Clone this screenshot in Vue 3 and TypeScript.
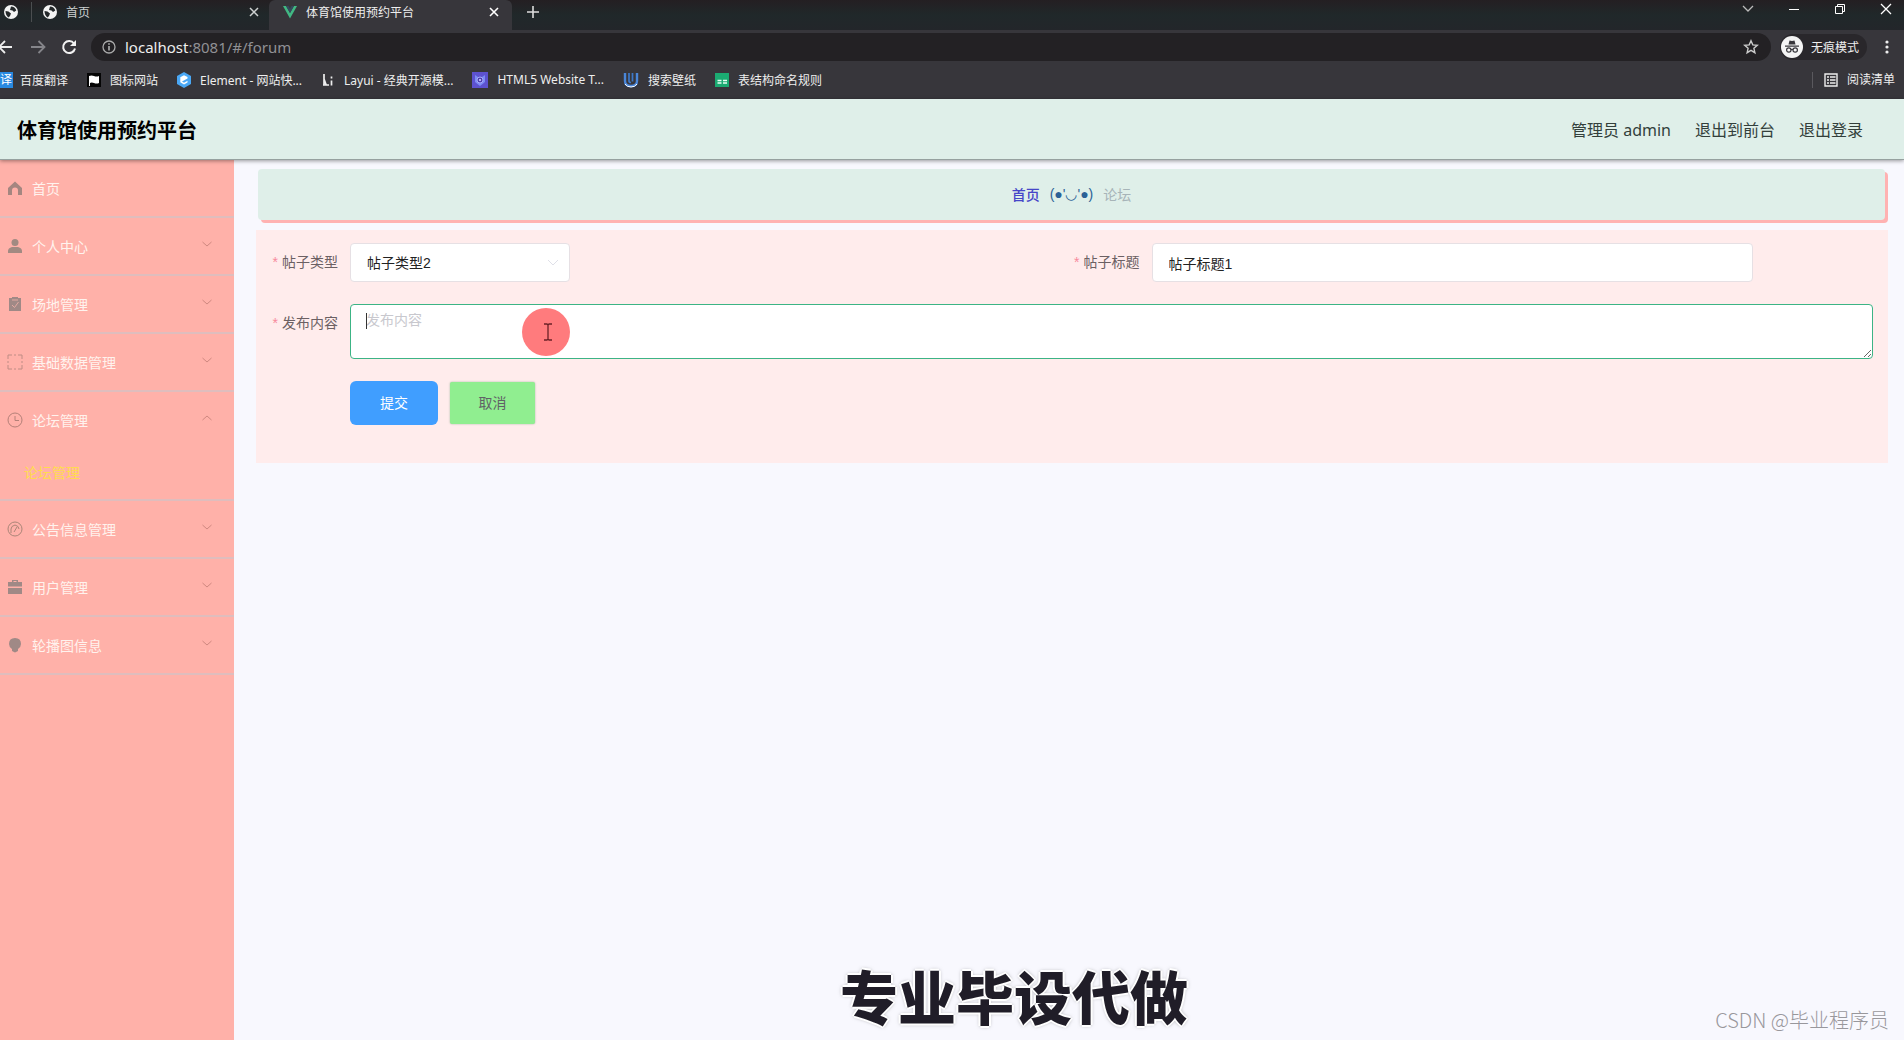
<script setup lang="ts">
import { ref } from 'vue'

interface MenuItem {
  label: string
  icon: string
  open?: boolean
  children?: string[]
}

const menu: MenuItem[] = [
  { label: '首页', icon: 'home' },
  { label: '个人中心', icon: 'user', children: [] },
  { label: '场地管理', icon: 'claim', children: [] },
  { label: '基础数据管理', icon: 'scan', children: [] },
  { label: '论坛管理', icon: 'clock', open: true, children: ['论坛管理'] },
  { label: '公告信息管理', icon: 'compass', children: [] },
  { label: '用户管理', icon: 'case', children: [] },
  { label: '轮播图信息', icon: 'bulb', children: [] },
]

const postType = ref('帖子类型2')
const postTitle = ref('帖子标题1')
const postContent = ref('')
</script>

<template>
  <div class="page">
    <div class="browser">
      <div class="tabs">
        <div class="tab pinned">
          <svg class="ico16" viewBox="0 0 16 16"><circle cx="8" cy="8" r="7" fill="#f4f4f4" /><path d="M2.500 7l3 .5L8 9.500 7 12l-1.500 1.500Q2.500 11 2.500 7zM8 2.500q4 0 5.300 4L11 8 9.500 6.500 7 6z" fill="#24282a" /></svg>
        </div>
        <div class="tab first">
          <svg class="ico16" viewBox="0 0 16 16"><circle cx="8" cy="8" r="7" fill="#f4f4f4" /><path d="M2.500 7l3 .5L8 9.500 7 12l-1.500 1.500Q2.500 11 2.500 7zM8 2.500q4 0 5.300 4L11 8 9.500 6.500 7 6z" fill="#24282a" /></svg>
          <span class="tab-name">首页</span>
          <button class="bare" aria-label="关闭"><svg width="10" height="10" viewBox="0 0 10 10"><path d="M1 1l8 8M9 1l-8 8" stroke="#cfd2d2" stroke-width="1.500" /></svg></button>
        </div>
        <div class="tab active">
          <svg class="ico16" viewBox="0 0 16 16"><path d="M1 2h3l4 7 4-7h3L8 14.500z" fill="#41b883" /><path d="M4 2h2.500L8 4.700 9.500 2H12L8 9z" fill="#35495e" /></svg>
          <span class="tab-name">体育馆使用预约平台</span>
          <button class="bare" aria-label="关闭"><svg width="10" height="10" viewBox="0 0 10 10"><path d="M1 1l8 8M9 1l-8 8" stroke="#fff" stroke-width="1.600" /></svg></button>
        </div>
        <button class="bare plus" aria-label="新标签页"><svg width="14" height="14" viewBox="0 0 14 14"><path d="M7 1v12M1 7h12" stroke="#ddd" stroke-width="1.600" /></svg></button>
        <div class="window">
          <button class="bare" aria-label="搜索标签页"><svg width="12" height="12" viewBox="0 0 12 12"><path d="M1 3l5 5 5-5" fill="none" stroke="#bbb" stroke-width="1.300" /></svg></button>
          <button class="bare" aria-label="最小化"><svg width="12" height="12" viewBox="0 0 12 12"><path d="M1 6.500h10" stroke="#fff" /></svg></button>
          <button class="bare" aria-label="还原"><svg width="12" height="12" viewBox="0 0 12 12"><path d="M1.500 3.500h7v7h-7zM3.500 3V1.500h7v7H9" fill="none" stroke="#fff" /></svg></button>
          <button class="bare" aria-label="关闭窗口"><svg width="12" height="12" viewBox="0 0 12 12"><path d="M1 1l10 10M11 1L1 11" stroke="#fff" stroke-width="1.300" /></svg></button>
        </div>
      </div>

      <div class="toolbar">
        <button class="bare" aria-label="后退"><svg width="12" height="16" viewBox="0 0 12 16"><path d="M12 8H0M5 2L-1 8l6 6" fill="none" stroke="#eee" stroke-width="1.800" /></svg></button>
        <button class="bare forward" aria-label="前进"><svg width="16" height="16" viewBox="0 0 16 16"><path d="M1 8h13M8.500 2l6 6-6 6" fill="none" stroke="#85858a" stroke-width="1.800" /></svg></button>
        <button class="bare reload" aria-label="刷新"><svg width="16" height="16" viewBox="0 0 16 16"><path d="M13 4.500A6 6 0 1 0 14 9.500" fill="none" stroke="#f2f2f2" stroke-width="2" /><path d="M15 1v6H9z" fill="#f2f2f2" /></svg></button>
        <div class="address">
          <svg width="14" height="14" viewBox="0 0 14 14"><circle cx="7" cy="7" r="6" fill="none" stroke="#aaa" stroke-width="1.300" /><path d="M7 6v4.500M7 3.300v1.500" stroke="#bbb" stroke-width="1.500" /></svg>
          <span class="url"><b>localhost</b>:8081/#/forum</span>
          <svg class="star" width="16" height="16" viewBox="0 0 16 16"><path d="M8 1.800l1.800 4.100 4.500.4-3.400 3 1 4.400L8 11.400l-3.900 2.300 1-4.400-3.400-3 4.500-.4z" fill="none" stroke="#ccc" stroke-width="1.400" /></svg>
        </div>
        <div class="incognito">
          <svg width="22" height="22" viewBox="0 0 22 22"><circle cx="11" cy="11" r="11" fill="#f4f4f4" /><path d="M7.500 8.500L8.500 4.500l2.500.6 2.500-.6 1 4zM4 9.500h14v1.300H4z" fill="#37363b" /><g fill="none" stroke="#37363b" stroke-width="1.200"><circle cx="7.800" cy="14" r="2.200" /><circle cx="14.200" cy="14" r="2.200" /><path d="M10 13.700q1-.7 2 0" /></g></svg>
          <span>无痕模式</span>
        </div>
        <button class="bare dots" aria-label="菜单"><svg width="4" height="16" viewBox="0 0 4 16"><g fill="#eee"><circle cx="2" cy="3" r="1.600" /><circle cx="2" cy="8" r="1.600" /><circle cx="2" cy="13" r="1.600" /></g></svg></button>
      </div>

      <div class="bookmarks">
        <a href="#" class="mark clipped"><span class="yi">译</span>百度翻译</a>
        <a href="#" class="mark"><svg width="14" height="14" viewBox="0 0 14 14"><path d="M0 0h14v14H0z" fill="#050505" /><path d="M2 3q2.500-1 5 0t5 0v7q-2.500 1-5 0t-4 0v3H2z" fill="#fff" /></svg>图标网站</a>
        <a href="#" class="mark"><svg width="14" height="16" viewBox="0 0 14 16"><path d="M7 0l7 4v8l-7 4-7-4V4z" fill="#4aa8f5" /><path d="M10.500 5L7 3.200 3.300 5.300v5L7 12.500l3.500-2V8.700L7 10.700 5 9.600l5.500-3.100z" fill="#fff" /></svg>Element - 网站快...</a>
        <a href="#" class="mark"><svg width="14" height="14" viewBox="0 0 14 14"><path d="M3 1v11M3 6l2 5.500M2 12h6M10.500 7.500v5M10.500 3.500v2" fill="none" stroke="#eee" stroke-width="1.700" /></svg>Layui - 经典开源模...</a>
        <a href="#" class="mark"><svg width="16" height="16" viewBox="0 0 16 16"><path d="M0 0h16v16H0z" fill="#5d52cf" /><path d="M3 3l3 2h4l3-2v7l-5 4-5-4z" fill="#7b8cf5" /><circle cx="8" cy="8" r="3" fill="#4a3fb0" stroke="#a9a8f8" /><circle cx="8" cy="8" r="1" fill="#dcdcff" /></svg>HTML5 Website T...</a>
        <a href="#" class="mark"><svg width="16" height="16" viewBox="0 0 16 16"><path d="M2 1v8q0 5 6 5t6-5V1" fill="none" stroke="#4a86d8" stroke-width="2.400" /><path d="M6 1v8q0 1.500 2 1.500M9.500 1v8.500" fill="none" stroke="#3d78c8" stroke-width="1.700" /><path d="M2 12q2 3 6 3t6-3" fill="none" stroke="#fff" /></svg>搜索壁纸</a>
        <a href="#" class="mark"><svg width="14" height="14" viewBox="0 0 14 14"><path d="M0 0h14v14H0z" fill="#1bab72" /><path d="M2.500 7.500h4M8 7.500h4M2.500 10h4M8 10h4" stroke="#e8fff4" stroke-width="1.400" /></svg>表结构命名规则</a>
        <a href="#" class="mark reading"><svg width="14" height="14" viewBox="0 0 14 14"><path d="M1 1h12v12H1zM3 4h2M3 7h2M3 10h2M6 4h5.500M6 7h5.500M6 10h5.500" fill="none" stroke="#eee" stroke-width="1.400" /></svg>阅读清单</a>
      </div>
    </div>

    <header class="header">
      <h1>体育馆使用预约平台</h1>
      <nav>
        <span>管理员 admin</span>
        <a href="#">退出到前台</a>
        <a href="#">退出登录</a>
      </nav>
    </header>

    <div class="body">
      <aside class="sidebar">
        <ul>
          <li v-for="item in menu" :key="item.label">
            <a href="#" class="item">
              <svg class="ico16" viewBox="0 0 16 16">
                <path v-if="item.icon === 'home'" d="M8 1.500L15 8v7h-4v-4.500a3 3 0 0 0-6 0V15H1V8z" fill="#a58680" />
                <template v-else-if="item.icon === 'user'"><circle cx="8" cy="4.500" r="3.500" fill="#a28a82" /><path d="M1 15v-2q0-3 4-4h6q4 1 4 4v2z" fill="#a28a82" /></template>
                <template v-else-if="item.icon === 'claim'"><path d="M2 2h3V1h6v1h3v13H2z" fill="#a08986" /><path d="M5 9l2.500 2.500L11.500 6M5 4h6" fill="none" stroke="#e3aaa2" /></template>
                <path v-else-if="item.icon === 'scan'" d="M1 5V1h4M11 1h4v4M15 11v4h-4M5 15H1v-4M1 7v2M15 7v2M7 1h2M7 15h2" fill="none" stroke="#bf8c84" />
                <template v-else-if="item.icon === 'clock'"><circle cx="8" cy="8" r="7" fill="none" stroke="#b48078" /><path d="M8 4v4.500h4" fill="none" stroke="#b48078" /></template>
                <template v-else-if="item.icon === 'compass'"><circle cx="8" cy="8" r="7" fill="none" stroke="#ab8577" /><path d="M4 12V8q0-3 4-4 4 1 4 4M7 11l3-5" fill="none" stroke="#ab8577" /></template>
                <path v-else-if="item.icon === 'case'" d="M5 3V1h6v2h4v4.500H1V3zM1 9h14v6H1zM6.500 3h3V2h-3z" fill="#a08986" fill-rule="evenodd" />
                <path v-else d="M8 1q6 0 6 6 0 3-3 5v2l-3 1.500L5 14v-2Q2 10 2 7q0-6 6-6z" fill="#a08986" />
              </svg>
              <span>{{ item.label }}</span>
              <svg v-if="item.children" class="arrow" :class="{ up: item.open }" width="12" height="12" viewBox="0 0 12 12"><path d="M1.500 4L6 8l4.500-4" fill="none" stroke="#cf8880" /></svg>
            </a>
            <a v-for="child in item.children" :key="child" href="#" class="sub">{{ child }}</a>
          </li>
        </ul>
      </aside>

      <main class="main">
        <div class="crumbs">
          <a href="#">首页</a>
          <span class="face">(●'◡'●)</span>
          <span class="here">论坛</span>
        </div>

        <form class="panel" @submit.prevent>
          <div class="row">
            <div class="field">
              <label for="type">帖子类型</label>
              <div class="select">
                <select id="type" v-model="postType">
                  <option>帖子类型1</option>
                  <option>帖子类型2</option>
                </select>
                <svg width="14" height="14" viewBox="0 0 14 14"><path d="M2 5l5 5 5-5" fill="none" stroke="#dfe0e8" /></svg>
              </div>
            </div>
            <div class="field">
              <label for="title">帖子标题</label>
              <input id="title" v-model="postTitle" type="text" />
            </div>
          </div>
          <div class="field">
            <label for="content">发布内容</label>
            <div class="area">
              <textarea id="content" v-model="postContent" placeholder="发布内容"></textarea>
              <i class="caret"></i>
              <span class="pointer">
                <svg width="10" height="18" viewBox="0 0 10 18"><path d="M1 1h3l1 1 1-1h3M5 2v14M1 17h3l1-1 1 1h3" fill="none" stroke="#6b2227" stroke-width="1.300" /></svg>
              </span>
            </div>
          </div>
          <div class="actions">
            <button type="submit" class="submit">提交</button>
            <button type="button" class="cancel">取消</button>
          </div>
        </form>
      </main>
    </div>

    <p class="caption">专业毕设代做</p>
    <p class="credit">CSDN @毕业程序员</p>
  </div>
</template>

<style>
body {
  margin: 0;
}
</style>

<style scoped>
* {
  box-sizing: border-box;
}
.page {
  position: relative;
  display: flex;
  flex-direction: column;
  min-height: 100vh;
  overflow: hidden;
  background: #f8f8fe;
  font-family: 'Noto Sans', 'Noto Sans CJK SC', sans-serif;
  font-size: 14px;
}
a {
  color: inherit;
  text-decoration: none;
}
svg {
  display: block;
  flex: none;
}
.ico16 {
  width: 16px;
  height: 16px;
}
.bare {
  display: block;
  padding: 0;
  border: 0;
  background: none;
}

.browser {
  color: #eee;
  font-size: 12px;
  background: #37363b;
}
.tabs {
  display: flex;
  align-items: center;
  height: 30px;
  padding-bottom: 6px;
  background: linear-gradient(#241f22, #20282a 50%, #23262a);
}
.tab {
  display: flex;
  align-items: center;
  gap: 8px;
}
.pinned {
  width: 32px;
  height: 20px;
  padding-left: 3px;
  border-right: 1px solid #4b4e50;
}
.first {
  width: 237px;
  padding: 0 10px;
  color: #ccd0d0;
}
.active {
  align-self: flex-start;
  width: 243px;
  height: 30px;
  padding: 0 13px 6px;
  border-radius: 6px 6px 0 0;
  background: #37363b;
}
.tab-name {
  flex: 1;
}
.plus {
  margin-left: 14px;
}
.window {
  display: flex;
  gap: 34px;
  margin-left: auto;
  padding: 0 12px 6px 0;
}
.toolbar {
  display: flex;
  align-items: center;
  height: 34px;
}
.forward {
  margin-left: 18px;
}
.reload {
  margin-left: 15px;
}
.address {
  display: flex;
  flex: 1;
  align-items: center;
  gap: 9px;
  height: 28px;
  margin-left: 14px;
  padding: 0 12px 0 11px;
  border-radius: 14px;
  background: #232124;
}
.url {
  flex: 1;
  color: #909094;
  font-size: 15px;
}
.url b {
  color: #eee;
  font-weight: 400;
}
.incognito {
  display: flex;
  align-items: center;
  gap: 8px;
  height: 26px;
  margin-left: 9px;
  padding: 0 8px 0 1px;
  border-radius: 13px;
  background: #29272b;
}
.dots {
  margin: 0 15px 0 18px;
}
.bookmarks {
  display: flex;
  align-items: center;
  gap: 19px;
  height: 35px;
  padding-bottom: 4px;
}
.mark {
  display: flex;
  align-items: center;
  gap: 9px;
}
.clipped {
  gap: 7px;
}
.yi {
  width: 13px;
  height: 16px;
  overflow: hidden;
  background: #2889e0;
  color: #fff;
  line-height: 16px;
}
.reading {
  margin-left: auto;
  padding: 0 9px 0 11px;
  border-left: 1px solid #5a595e;
  line-height: 16px;
}

.header {
  position: relative;
  z-index: 1;
  display: flex;
  align-items: center;
  justify-content: space-between;
  height: 61px;
  padding: 0 41px 0 17px;
  border-bottom: 1px solid #96a19f;
  background: #dfefe9;
  box-shadow: 0 1px 4px rgba(0, 0, 0, 0.4);
}
.header h1 {
  margin: 0;
  color: #000;
  font-size: 20px;
}
.header nav {
  display: flex;
  gap: 24px;
  color: #333f3b;
  font-size: 16px;
}

.body {
  display: flex;
  flex: 1;
}
.sidebar {
  width: 234px;
  flex: none;
  background: #ffb1a9;
}
.sidebar ul {
  margin: 0;
  padding: 0;
  list-style: none;
}
.sidebar li {
  border-bottom: 2px solid #dfbdbd;
}
.item {
  display: flex;
  align-items: center;
  gap: 9px;
  height: 56px;
  padding: 0 21px 0 7px;
  color: #fff3ee;
}
.arrow {
  margin: 0 0 4px auto;
}
.up {
  transform: rotate(180deg);
}
.sub {
  display: block;
  height: 51px;
  padding-left: 24px;
  color: #ffdc4e;
  line-height: 50px;
}

.main {
  flex: 1;
  padding: 9px 16px 0 22px;
}
.crumbs {
  display: flex;
  align-items: center;
  justify-content: center;
  gap: 10px;
  height: 51px;
  margin: 0 3px 0 2px;
  padding-bottom: 2px;
  border-radius: 4px;
  background: #dfefe9;
  box-shadow: 3px 3px 0 #ffb2b2;
}
.crumbs a {
  color: #4646c8;
  font-weight: 500;
}
.face {
  color: #2b6196;
  font-family: 'Liberation Sans', 'Noto Sans CJK SC', sans-serif;
}
.here {
  color: #a7b4b8;
}
.panel {
  display: flex;
  flex-direction: column;
  gap: 22px;
  margin-top: 10px;
  padding: 13px 15px 38px 14px;
  background: #ffecec;
  font-family: 'Liberation Sans', 'Noto Sans CJK SC', sans-serif;
}
.row {
  display: grid;
  grid-template-columns: 1fr 1fr;
}
.field {
  display: flex;
}
.field label {
  width: 80px;
  flex: none;
  padding-right: 12px;
  color: #6b6063;
  line-height: 38px;
  text-align: right;
  white-space: nowrap;
}
.field label::before {
  content: '*';
  margin-right: 4px;
  color: #f78a9c;
}
input,
select,
textarea {
  display: block;
  border: 1px solid #e6e0e4;
  border-radius: 4px;
  outline: 0;
  background: #fff;
  color: #222;
  font: inherit;
}
.select {
  position: relative;
  width: 220px;
}
select {
  width: 100%;
  height: 39px;
  padding: 0 30px 0 16px;
  appearance: none;
}
.select svg {
  position: absolute;
  top: 12px;
  right: 10px;
}
input {
  width: 75%;
  height: 39px;
  padding: 0 16px;
}
.area {
  position: relative;
  flex: 1;
}
textarea {
  width: 100%;
  height: 55px;
  padding: 5px 15px;
  border-color: #3cb485;
  line-height: 21px;
  resize: vertical;
}
textarea::placeholder {
  color: #c8c8ce;
}
.caret {
  position: absolute;
  top: 9px;
  left: 16px;
  width: 1px;
  height: 16px;
  background: #333;
}
.pointer {
  position: absolute;
  top: 4px;
  left: 172px;
  display: flex;
  align-items: center;
  justify-content: center;
  width: 48px;
  height: 48px;
  padding-left: 4px;
  border-radius: 50%;
  background: #ff7b7d;
}
.actions {
  display: flex;
  align-items: center;
  gap: 12px;
  padding-left: 80px;
}
.actions button {
  padding-bottom: 3px;
  border: 0;
  font: inherit;
}
.submit {
  width: 88px;
  height: 44px;
  border-radius: 6px;
  background: #409eff;
  color: #fff;
}
.cancel {
  width: 85px;
  height: 42px;
  border-radius: 2px;
  background: #90ee90;
  box-shadow: 0 0 2px #9fb69f;
  color: #606266;
}

.caption {
  position: absolute;
  right: 0;
  bottom: 2px;
  left: 124px;
  margin: 0;
  color: #201d28;
  font-size: 58px;
  font-weight: 900;
  line-height: 80px;
  text-align: center;
  text-shadow: 0 0 1px #fff, 2px 0 0 #fff, -2px 0 0 #fff, 0 2px 0 #fff, 0 -2px 0 #fff, 0 0 4px #777;
}
.credit {
  position: absolute;
  right: 15px;
  bottom: 5px;
  margin: 0;
  color: #98979c;
  font-family: 'Noto Sans CJK SC', sans-serif;
  font-size: 20px;
  font-weight: 300;
  line-height: 30px;
}
</style>
